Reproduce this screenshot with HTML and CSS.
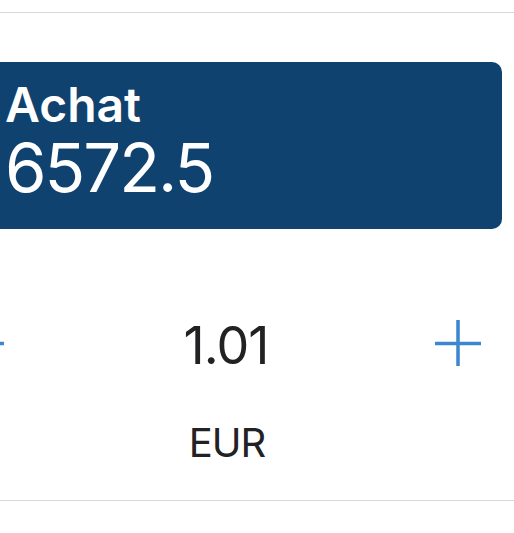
FILE: index.html
```html
<!DOCTYPE html>
<html lang="fr">
<head>
    <meta charset="UTF-8">
    <meta name="viewport" content="width=device-width, initial-scale=1.0">
    <title>Achat</title>
    <link rel="stylesheet" href="styles.css">
</head>
<body>

    <div class="rule rule-top"></div>

    <div class="price-card">
        <div class="price-label">Achat</div>
        <div class="price-value">6572.5</div>
    </div>

    <div class="stepper">
        <button type="button" class="step-btn step-minus" aria-label="Moins">
            <svg width="46" height="46" viewBox="0 0 46 46"><path d="M0 23.5H46" stroke="#3a87d0" stroke-width="3.5"/></svg>
        </button>
        <div class="step-value">1.01</div>
        <button type="button" class="step-btn step-plus" aria-label="Plus">
            <svg width="46" height="46" viewBox="0 0 46 46"><path d="M0 23.5H46M23 0V46" stroke="#3a87d0" stroke-width="3.5"/></svg>
        </button>
    </div>

    <div class="currency">EUR</div>

    <div class="rule rule-bottom"></div>

</body>
</html>
```

FILE: styles.css
```css
body {
    font-family: Inter, "Noto Sans", sans-serif;
    margin: 0;
    background-color: #fff;
    color: #222224;
    overflow: hidden;
}
.rule {
    height: 1px;
    background-color: #d9d9dd;
}
.rule-top {
    margin-top: 12px;
}
.price-card {
    margin-top: 49px;
    margin-left: -12px;
    width: 514px;
    height: 167px;
    box-sizing: border-box;
    padding: 14px 0 0 17px;
    background-color: #10426f;
    border-radius: 10px;
    color: #fff;
}
.price-label {
    font-size: 48px;
    font-weight: 600;
    line-height: 58px;
}
.price-value {
    margin-top: 1px;
    font-size: 67px;
    font-weight: 400;
    line-height: 66px;
    letter-spacing: -2px;
}
.stepper {
    display: flex;
    align-items: flex-start;
    height: 60px;
    margin-top: 87px;
    padding-right: 33px;
}
.step-btn {
    width: 46px;
    height: 46px;
    margin-top: 4px;
    padding: 0;
    border: none;
    background: none;
}
.step-btn svg {
    display: block;
}
.step-minus {
    margin-left: -42px;
}
.step-value {
    flex: 1;
    padding-left: 13px;
    text-align: center;
    font-size: 52px;
    line-height: 60px;
    letter-spacing: -1px;
}
.currency {
    margin-top: 43px;
    padding-right: 60px;
    text-align: center;
    font-size: 40px;
    line-height: 48px;
    letter-spacing: -1px;
}
.rule-bottom {
    margin-top: 33px;
}
```
